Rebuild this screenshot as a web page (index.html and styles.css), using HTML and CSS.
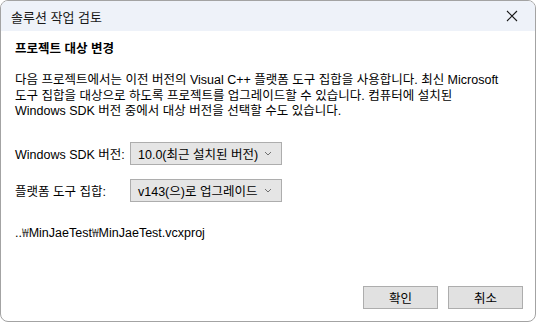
FILE: index.html
```html
<!DOCTYPE html>
<html lang="ko">
<head>
  <meta charset="UTF-8">
  <title>솔루션 작업 검토</title>
  <link rel="stylesheet" href="styles.css">
</head>
<body>
  <div class="window">
    <div class="titlebar">
      <span class="title">솔루션 작업 검토</span>
      <svg class="close" width="12" height="12" viewBox="0 0 12 12">
        <path d="M1 1 L11 11 M11 1 L1 11" stroke="#1a1a1a" stroke-width="1.1" fill="none"/>
      </svg>
    </div>

    <div class="content">
      <h1>프로젝트 대상 변경</h1>
      <p class="desc">
        다음 프로젝트에서는 이전 버전의 Visual C++ 플랫폼 도구 집합을 사용합니다. 최신 Microsoft<br>
        도구 집합을 대상으로 하도록 프로젝트를 업그레이드할 수 있습니다. 컴퓨터에 설치된<br>
        Windows SDK 버전 중에서 대상 버전을 선택할 수도 있습니다.
      </p>

      <div class="field">
        <label>Windows SDK 버전:</label>
        <div class="combo">
          <span>10.0(최근 설치된 버전)</span>
          <svg width="8" height="5" viewBox="0 0 8 5"><path d="M1 1 L4 4 L7 1" stroke="#707070" fill="none"/></svg>
        </div>
      </div>

      <div class="field">
        <label>플랫폼 도구 집합:</label>
        <div class="combo">
          <span>v143(으)로 업그레이드</span>
          <svg width="8" height="5" viewBox="0 0 8 5"><path d="M1 1 L4 4 L7 1" stroke="#707070" fill="none"/></svg>
        </div>
      </div>

      <div class="path">..<span class="won">₩</span>MinJaeTest<span class="won">₩</span>MinJaeTest.vcxproj</div>
    </div>

    <div class="buttons">
      <button class="btn">확인</button>
      <button class="btn">취소</button>
    </div>
  </div>
</body>
</html>
```

FILE: styles.css
```css
body {
  margin: 0;
  padding: 0;
  background: #ffffff;
  font-family: "Liberation Sans", "Noto Sans CJK KR", sans-serif;
  font-size: 12.5px;
  color: #000;
}

.window {
  width: 534px;
  height: 320px;
  border: 1px solid #a3a3a3;
  border-radius: 8px;
  overflow: hidden;
  display: flex;
  flex-direction: column;
  background: #fff;
}

.titlebar {
  height: 30px;
  background: #eef2f9;
  display: flex;
  align-items: center;
  justify-content: space-between;
  padding: 0 17px 0 10px;
}

.title {
  font-size: 13px;
  color: #1a1a1a;
}

.content {
  flex: 1;
  padding: 0 14px;
}

h1 {
  font-size: 12.5px;
  font-weight: bold;
  margin: 10px 0 0;
  line-height: 16px;
}

.desc {
  margin: 16px 0 0;
  line-height: 15.5px;
}

.field {
  display: flex;
  align-items: center;
  margin-top: 22px;
}

.field + .field {
  margin-top: 14px;
}

.field label {
  width: 115px;
  flex-shrink: 0;
}

.combo {
  width: 152px;
  height: 23px;
  flex-shrink: 0;
  box-sizing: border-box;
  border: 1px solid #adadad;
  background: #e5e5e5;
  display: flex;
  align-items: center;
  justify-content: space-between;
  padding: 0 9px 0 7px;
}

.path {
  margin-top: 21px;
  line-height: 17px;
}

.won {
  font-family: "Noto Sans CJK KR", sans-serif;
  font-weight: 300;
}

.buttons {
  display: flex;
  justify-content: flex-end;
  gap: 10px;
  padding: 0 12px 12px;
}

.btn {
  width: 75px;
  height: 23px;
  border: 1px solid #adadad;
  background: #e1e1e1;
  font-family: inherit;
  font-size: 12.5px;
  color: #000;
  padding: 0;
}
```
